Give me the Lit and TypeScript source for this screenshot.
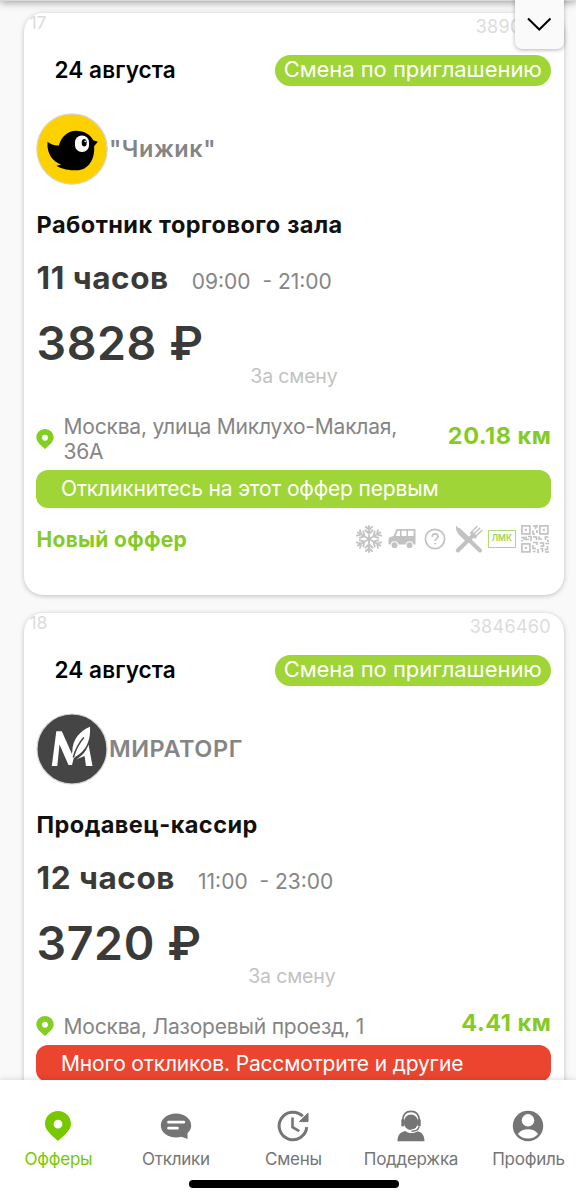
import { LitElement, html, css, svg, nothing } from "lit";
import { customElement, property } from "lit/decorators.js";

interface Offer {
  index: number;
  id: string;
  date: string;
  brand: string;
  logo: "chizhik" | "miratorg";
  title: string;
  hours: string;
  time: string;
  pay: string;
  address: string;
  distance: string;
  notice: string;
  hot?: boolean;
}

const offers: Offer[] = [
  {
    index: 17, id: "3890127", date: "24 августа", brand: "\"Чижик\"", logo: "chizhik",
    title: "Работник торгового зала", hours: "11 часов", time: "09:00  - 21:00", pay: "3828 ₽",
    address: "Москва, улица Миклухо-Маклая, 36А", distance: "20.18 км",
    notice: "Откликнитесь на этот оффер первым",
  },
  {
    index: 18, id: "3846460", date: "24 августа", brand: "МИРАТОРГ", logo: "miratorg",
    title: "Продавец-кассир", hours: "12 часов", time: "11:00  - 23:00", pay: "3720 ₽",
    address: "Москва, Лазоревый проезд, 1", distance: "4.41 км",
    notice: "Много откликов. Рассмотрите и другие", hot: true,
  },
];

const chizhik = html`<svg width="72" height="72" viewBox="0 0 72 72">
  <circle cx="36" cy="36" r="35.200" fill="#fdd000" stroke="#d9d5c8" stroke-width="1.200"/>
  <path d="M11.500 28.700c3 2.600 7 4 11.300 3.700C25.500 23.500 32 17.800 40 17.800c8.200 0 14.600 4 17.200 9.400l4.600 1.600-3.700 4.400C59.200 46 52.500 57.300 40.500 57.300c-7 0-14.500-1-20-4.600l4.600-1.200C17 48.500 10.500 41 11.500 28.700z" fill="#000"/>
  <rect x="39" y="22.500" width="14" height="16.500" rx="6.800" fill="#fff"/>
  <ellipse cx="48.200" cy="29.800" rx="2.500" ry="3.800" fill="#000"/>
  <circle cx="49.200" cy="28.400" r=".8" fill="#fff"/>
</svg>`;

const miratorg = html`<svg width="72" height="72" viewBox="0 0 72 72">
  <circle cx="36" cy="36" r="35" fill="#454545" stroke="#d4d4d4" stroke-width="1.200"/>
  <path d="M20.300 18.200H25.800L36.200 41.500L37.500 46L36 52H32.500L23.500 31.500L21.300 53H15.800Z" fill="#fff"/>
  <path d="M52.500 31.500L56.500 53H50L48.600 43L40 46.500C47 42.500 50.500 37.500 52.500 31.500Z" fill="#fff"/>
  <path d="M54 13.800C43.500 18 36.500 27 36.300 38.500L34 51C37 44.500 40 43.500 43.500 41C51 35.500 54.800 26 54 13.800Z" fill="#fff"/>
  <path d="M47.800 24.500C42.500 30.500 39.500 36.500 37.300 44.500" fill="none" stroke="#454545" stroke-width="1.500"/>
</svg>`;

const pin = (w: number, h: number) => html`<svg width=${w} height=${h} viewBox="0 0 26 30">
  <path fill-rule="evenodd" d="M13 0C5.800 0 0 5.600 0 12.800 0 19.500 6.500 24 13 30c6.500-6 13-10.500 13-17.200C26 5.600 20.200 0 13 0zm0 8.800a4.400 4.400 0 1 1 0 8.800 4.400 4.400 0 0 1 0-8.800z" fill="currentColor"/>
</svg>`;

const snow = html`<svg width="28" height="28" viewBox="-14 -14 28 28" fill="none" stroke="#c4c4c4" stroke-width="1.900" stroke-linecap="round">
  ${[0, 60, 120, 180, 240, 300].map((a) => svg`<path transform="rotate(${a})" d="M0 0V-13M-3.200-12.200L0-9.200l3.200-3M-3.600-8.700L0-5.200l3.600-3.500"/>`)}
</svg>`;

const van = html`<svg width="28" height="22" viewBox="0 0 28 22">
  <path fill-rule="evenodd" d="M8.500 1H26.500Q27.500 1 27.500 2V16.500H25.500A4 4 0 0 0 17.600 16.500H10.500A4 4 0 0 0 2.600 16.500H.5V11Q.8 9.300 3 8.800L5.500 8ZM9.800 2.800L7.800 8H12V2.800ZM13.600 2.800V8H18.500V2.800ZM20 2.800V8H25.600V2.800Z" fill="#c2c2c2"/>
  <circle cx="6.500" cy="17.200" r="2.900" fill="#c2c2c2"/><circle cx="21.500" cy="17.200" r="2.900" fill="#c2c2c2"/>
</svg>`;

const help = html`<svg width="22" height="22" viewBox="0 0 22 22" fill="none" stroke="#c2c2c2">
  <circle cx="11" cy="11" r="9.600" stroke-width="1.700"/>
  <path d="M8.200 8.900c0-1.900 1.200-3 2.900-3s2.900 1.100 2.900 2.600c0 2-2.900 2.300-2.900 4.400" stroke-width="1.700"/>
  <circle cx="11.100" cy="15.600" r=".65" fill="#c2c2c2" stroke-width=".8"/>
</svg>`;

const cutlery = html`<svg width="28" height="28" viewBox="0 0 28 28" fill="none" stroke="#c2c2c2" stroke-linecap="round">
  <path d="M2.800 25.500L18 10.500" stroke-width="4"/>
  <path d="M16 7.500L22 1.500M18.500 9.300L24.700 3.200M20.500 11.500L26.800 5.500" stroke-width="1.500"/>
  <path d="M17 8.500l3.200 3.200" stroke-width="3.400"/>
  <path d="M1 .8c-.8 4 2 8.500 5.500 11.500l4 4 4-3.500z" fill="#c2c2c2" stroke="none"/>
  <path d="M4 5.500L14 15" stroke-width="4.500"/>
  <path d="M14 15l11 10.500" stroke-width="4"/>
</svg>`;

const finders = [[0, 0], [18, 0], [0, 18]];
const qr = html`<svg width="28" height="28" viewBox="0 0 28 28" fill="none" stroke="#bfbfbf" stroke-width="1.600">
  ${finders.map(([x, y]) => svg`<rect x=${x + .9} y=${y + .9} width="8" height="8"/><rect x=${x + 3.9} y=${y + 3.9} width="2" height="2" fill="#bfbfbf" stroke="none"/>`)}
  <path d="M12 1H14.500V4M16 0V2.500M12 5.500V9H14M16 5V8M0 12.500H3V15M5 11.500V14.500H8M7 11.500H10V16M12 12H15.500V15M18 11.500V14H21M23.500 12H27.500M24.500 12V15M27 14.500V17M12 17.500H16V20M12 20V23.500H15M12 26.500H14.500M17 24V28M18.500 18H22.500V21H19.500M24.500 18.500H28M26.500 21V24.500H23.500M19.500 23.500H21.500V27M24 27H28M0 15.800H2"/>
</svg>`;

const chat = html`<svg width="32" height="32" viewBox="0 0 32 32">
  <path d="M16 3.500c8.400 0 15.200 5.300 15.200 12 0 3-1.400 5.600-3.700 7.700V29l-6-2.300c-1.700.5-3.500.8-5.500.8C7.600 27.500.8 22.200.8 15.500S7.600 3.500 16 3.500z" fill="currentColor"/>
  <path d="M8.500 12.200h15.300M8.500 18.200h9" stroke="#fff" stroke-width="2.700" stroke-linecap="round"/>
</svg>`;

const clock = html`<svg width="32" height="32" viewBox="0 0 32 32" fill="none" stroke="currentColor">
  <path d="M29.700 17.200A13.800 13.800 0 1 1 25.800 6.300" stroke-width="3"/>
  <path d="M31 3.200V11.600H22.400Z" fill="currentColor" stroke-width="1" stroke-linejoin="round"/>
  <path d="M15.500 7.500V17.200l6.800 4" stroke-width="2.600"/>
</svg>`;

const support = html`<svg width="32" height="32" viewBox="0 0 32 32">
  <path d="M2.500 31.300c0-6 2.500-9.300 8-10.300 3 2.800 8 2.800 11 0 5.500 1 8 4.300 8 10.300z" fill="currentColor"/>
  <ellipse cx="16" cy="12.200" rx="7.200" ry="7.800" fill="currentColor"/>
  <path d="M7.600 10.500C8 4 11.500 1.400 16 1.400s8 2.600 8.400 9.100" fill="none" stroke="currentColor" stroke-width="1.700"/>
  <rect x="6.300" y="9" width="3" height="7.600" rx="1.400" fill="currentColor"/><rect x="22.700" y="9" width="3" height="7.600" rx="1.400" fill="currentColor"/>
  <path d="M23.500 16.500c-.4 3-3 4.600-7 4.600" fill="none" stroke="#fff" stroke-width="3.600"/>
  <path d="M24 16.500c-.3 3.200-3 4.700-7.500 4.700" fill="none" stroke="currentColor" stroke-width="1.600"/>
</svg>`;

const profile = html`<svg width="32" height="32" viewBox="0 0 32 32">
  <circle cx="16" cy="16" r="15.200" fill="currentColor"/>
  <circle cx="16" cy="10.300" r="6.200" fill="#fff"/>
  <path d="M6 24c2.300-3.300 6-4.700 10-4.700s7.700 1.400 10 4.700c-2.300 3-6 4.500-10 4.500S8.300 27 6 24z" fill="#fff"/>
</svg>`;

@customElement("offer-card")
export class OfferCard extends LitElement {
  @property({ attribute: false }) offer!: Offer;

  static styles = css`
    :host { display: block; }
    svg { display: block; flex: none; }
    .card { height: 582px; box-sizing: border-box; padding: 0 13px 0 12px; border-radius: 19px; background: #fff;
      box-shadow: 0 1px 5px rgba(0, 0, 0, .24); overflow: hidden; color: #7d7d7d; }
    .meta { display: flex; justify-content: space-between; height: 42px; color: #dcdcdc; font-size: 18px; }
    .index { margin-left: -6.500px; line-height: 19px; font-size: 17.500px; }
    .id { line-height: 27px; letter-spacing: .3px; }
    .top { display: flex; justify-content: space-between; align-items: center; height: 31px; padding-left: 18.500px; }
    .date { color: #000; font-weight: 600; font-size: 22.500px; line-height: 29px; margin-bottom: 2px; letter-spacing: .1px; }
    .badge { box-sizing: border-box; width: 276.500px; height: 30.500px; line-height: 29.500px; border-radius: 16px; background: #9fd536;
      color: #fff; font-size: 22px; letter-spacing: -.05px; text-align: center; }
    .brand { display: flex; align-items: center; height: 72px; margin-top: 27px; font-weight: 600; font-size: 23.500px; color: #858585; gap: 1px; }
    .name { letter-spacing: .55px; margin-bottom: 2px; }
    .title { height: 28px; margin-top: 26px; padding-left: .5px; line-height: 28px; color: #111; font-weight: 700; font-size: 23.500px; letter-spacing: .45px; word-spacing: .5px; }
    .hours { display: flex; align-items: baseline; height: 38px; line-height: 38px; margin-top: 20px; padding-left: .5px; color: #3a3a38; font-weight: 700; font-size: 31.500px; letter-spacing: .55px; }
    .time { margin-left: 23px; font-weight: 400; font-size: 21px; letter-spacing: 0; color: #858585; white-space: pre; }
    .pay { display: flex; height: 64px; margin-top: 22.500px; padding-left: .5px; }
    .sum { line-height: 46px; font-weight: 600; font-size: 46.500px; letter-spacing: .6px; color: #3a3a38; }
    .per { align-self: flex-end; margin-left: 46.500px; line-height: 16px; font-size: 19.500px; letter-spacing: -.15px; color: #c2c2c2; }
    .place { display: flex; align-items: center; margin-top: 30px; line-height: 25.500px; font-size: 21px; letter-spacing: -.2px; color: #858585; }
    .pin { color: #83ce21; }
    .address { width: 350px; margin-left: 9.500px; }
    .distance { margin: -7px -.3px 0 auto; color: #86ca28; font-weight: 700; font-size: 23.500px; letter-spacing: .5px; white-space: nowrap; }
    .notice { height: 37.500px; margin-top: 5.500px; padding-left: 25px; border-radius: 12px; background: #9fd536; color: #fff;
      line-height: 37.500px; font-size: 21px; letter-spacing: -.16px; white-space: nowrap; }
    .hot { background: #eb452f; }
    .foot { display: flex; align-items: center; height: 30px; margin-top: 16.500px; padding-left: .5px; }
    .fresh { color: #86ca28; font-weight: 700; font-size: 21px; letter-spacing: .3px; }
    .icons { display: flex; align-items: center; gap: 5.200px; margin-left: auto; padding-right: 2px; }
    .help { padding: 0 3px; }
    .lmk { box-sizing: border-box; width: 28px; height: 18px; border: 1.500px solid #aedb75; color: #9bd250;
      font-weight: 600; font-size: 8.500px; line-height: 15.500px; text-align: center; }
  `;

  render() {
    const o = this.offer;
    return html`<article class="card">
      <div class="meta"><span class="index">${o.index}</span><span class="id">${o.id}</span></div>
      <div class="top"><span class="date">${o.date}</span><span class="badge">Смена по приглашению</span></div>
      <div class="brand">${o.logo === "chizhik" ? chizhik : miratorg}<span class="name">${o.brand}</span></div>
      <div class="title">${o.title}</div>
      <div class="hours"><span>${o.hours}</span><span class="time">${o.time}</span></div>
      <div class="pay"><span class="sum">${o.pay}</span><span class="per">За смену</span></div>
      <div class="place"><span class="pin">${pin(18, 20)}</span><span class="address">${o.address}</span><span class="distance">${o.distance}</span></div>
      <div class="notice ${o.hot ? "hot" : ""}">${o.notice}</div>
      ${o.hot ? nothing : html`<div class="foot"><span class="fresh">Новый оффер</span>
        <div class="icons">${snow}${van}<span class="help">${help}</span>${cutlery}<span class="lmk">ЛМК</span>${qr}</div>
      </div>`}
    </article>`;
  }
}

@customElement("app-root")
export class AppRoot extends LitElement {
  static styles = css`
    :host { display: flex; flex-direction: column; position: relative; width: 576px; height: 1200px; overflow: hidden;
      background: #f9f9f9; font-family: Inter, "Liberation Sans", sans-serif; }
    svg { display: block; }
    .edge { position: absolute; top: -8px; left: 0; right: 0; height: 9px; background: #d8d8d8; box-shadow: 0 1px 9px rgba(0, 0, 0, .42); }
    .more { position: absolute; top: -8px; left: 515px; width: 48.500px; height: 57px; box-sizing: border-box; padding: 24px 0 0 12px;
      border-radius: 7px; background: #fafafa; box-shadow: 0 1px 4px rgba(0, 0, 0, .3); }
    .list { flex: 1; min-height: 0; display: flex; flex-direction: column; gap: 18px; padding: 13px 12px 0 24px; overflow: hidden; }
    .nav { position: relative; flex: none; height: 120px; box-sizing: border-box; background: #fff; box-shadow: 0 -1px 6px rgba(0, 0, 0, .12); }
    .tabs { display: grid; grid-template-columns: repeat(5, 117.500px); margin-left: -.3px; padding-top: 29.500px; }
    .tab { display: flex; flex-direction: column; align-items: center; gap: 5px; color: #757575; font-size: 17px; line-height: 24px; letter-spacing: -.25px; }
    .glyph { height: 32px; display: flex; align-items: center; }
    .active { color: #78c800; }
    .home { width: 210px; height: 7.500px; margin: 9.500px 0 0 189px; border-radius: 4px; background: #000; }
  `;

  render() {
    const tabs: [string, unknown][] = [
      ["Офферы", pin(26, 30)], ["Отклики", chat], ["Смены", clock], ["Поддержка", support], ["Профиль", profile],
    ];
    return html`
      <main class="list">${offers.map((o) => html`<offer-card .offer=${o}></offer-card>`)}</main>
      <div class="edge"></div>
      <div class="more"><svg width="25" height="16" viewBox="0 0 25 16"><path d="M1 2.500L12.300 13.500L23.500 2.500" fill="none" stroke="#000" stroke-width="2"/></svg></div>
      <nav class="nav">
        <div class="tabs">${tabs.map(([label, icon], i) => html`<div class="tab ${i === 0 ? "active" : ""}"><span class="glyph">${icon}</span>${label}</div>`)}</div>
        <div class="home"></div>
      </nav>`;
  }
}
